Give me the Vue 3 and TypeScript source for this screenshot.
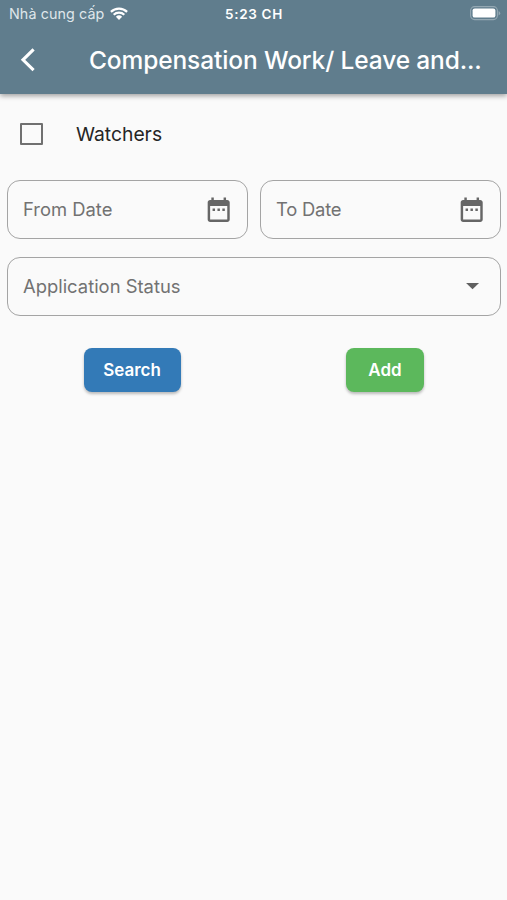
<script setup lang="ts">
import { ref } from 'vue'

interface DateField {
  id: string
  label: string
}

const provider = 'Nhà cung cấp'
const time = '5:23 CH'
const title = 'Compensation Work/ Leave and...'
const watchers = ref(false)
const dateFields: DateField[] = [
  { id: 'from', label: 'From Date' },
  { id: 'to', label: 'To Date' },
]
</script>

<template>
  <div class="screen">
    <header class="header">
      <div class="status">
        <div class="carrier">
          <span class="provider">{{ provider }}</span>
          <svg class="wifi" viewBox="0 0 18 13">
            <path d="M0.9 4.9a11.6 11.6 0 0 1 16.2 0M3.7 7.8a7.6 7.6 0 0 1 10.6 0" fill="none" stroke="#fff" stroke-width="2.2" />
            <path d="M5.9 9.7a4.5 4.5 0 0 1 6.2 0L9 12.9z" fill="#fff" />
          </svg>
        </div>
        <span class="time">{{ time }}</span>
        <svg class="battery" viewBox="0 0 31 15">
          <rect x="0.6" y="0.6" width="26.8" height="13" rx="4" fill="none" stroke="#94a8b3" stroke-width="1.1" />
          <rect x="2.6" y="2.4" width="22.8" height="9.2" rx="2.2" fill="#fff" />
          <path d="M28.6 5v4.4q1.6-.7 1.6-2.2T28.6 5z" fill="#94a8b3" />
        </svg>
      </div>
      <div class="toolbar">
        <button class="back" aria-label="Back">
          <svg viewBox="0 0 15 24"><path d="M13.6 1.4 3 11.8l10.6 10.4" fill="none" stroke="#fff" stroke-width="3.1" /></svg>
        </button>
        <h1 class="title">{{ title }}</h1>
      </div>
    </header>

    <main class="form">
      <div class="watchers" @click="watchers = !watchers">
        <span class="box" :class="{ checked: watchers }"></span>
        <span class="watchers-label">Watchers</span>
      </div>
      <div class="dates">
        <div v-for="field in dateFields" :key="field.id" class="field">
          <span :class="['label', field.id]">{{ field.label }}</span>
          <svg class="icon calendar" viewBox="0 0 24 24">
            <path d="M9 11H7v2h2v-2zm4 0h-2v2h2v-2zm4 0h-2v2h2v-2zm2-7h-1V2h-2v2H8V2H6v2H5c-1.11 0-1.99.9-1.99 2L3 20c0 1.1.89 2 2 2h14c1.1 0 2-.9 2-2V6c0-1.1-.9-2-2-2zm0 16H5V9h14v11z" fill="#666" />
          </svg>
        </div>
      </div>
      <div class="field select">
        <span class="label application">Application Status</span>
        <svg class="icon" viewBox="0 0 24 24"><path d="m7.4 9.7 5.3 5.2L18 9.7z" fill="#606060" /></svg>
      </div>
      <div class="actions">
        <div class="cell"><button class="btn search">Search</button></div>
        <div class="cell"><button class="btn add">Add</button></div>
      </div>
    </main>
  </div>
</template>

<style>
body {
  background: #fafafa;
}
</style>

<style scoped>
.screen {
  width: 100%;
  height: 900px;
  overflow: hidden;
  background: #fafafa;
  font-family: Inter, 'Liberation Sans', sans-serif;
}
.header {
  height: 94px;
  background: #607d8d;
  box-shadow: 0 2px 5px rgba(0, 0, 0, 0.36);
  color: #fff;
}
.status {
  display: grid;
  grid-template-columns: 1fr auto 1fr;
  align-items: center;
  height: 26px;
  padding: 0 6px 0 9px;
}
.carrier {
  display: flex;
  align-items: center;
  gap: 6px;
}
.provider {
  color: #dfe6ea;
  font-size: 14.3px;
  line-height: 26px;
  letter-spacing: 0.1px;
  padding-top: 1px;
}
.wifi {
  width: 18px;
  height: 13px;
}
.time {
  font-size: 13.5px;
  font-weight: 600;
  line-height: 26px;
  letter-spacing: 0.65px;
  padding-top: 1px;
  margin-right: 2px;
}
.battery {
  width: 31px;
  height: 15px;
  justify-self: end;
}
.toolbar {
  display: flex;
  align-items: center;
  height: 67px;
  padding-left: 20px;
}
.back {
  display: flex;
  width: 15px;
  height: 24px;
  padding: 0;
  border: 0;
  background: none;
}
.back svg {
  width: 15px;
  height: 24px;
}
.title {
  margin: 0 0 0 54px;
  font-size: 24.5px;
  font-weight: 500;
  line-height: 30px;
  letter-spacing: -0.12px;
  white-space: nowrap;
}
.form {
  padding: 29px 6px 0 7px;
}
.watchers {
  display: flex;
  align-items: center;
  height: 22px;
  padding-left: 13px;
}
.box {
  box-sizing: border-box;
  width: 23px;
  height: 22px;
  border: 2.4px solid #707070;
  border-radius: 1px;
}
.box.checked {
  background: #607d8d;
}
.watchers-label {
  margin-left: 33px;
  color: #252525;
  font-size: 19.3px;
  line-height: 22px;
}
.dates {
  display: grid;
  grid-template-columns: 1fr 1fr;
  gap: 12px;
  margin-top: 35px;
}
.field {
  box-sizing: border-box;
  display: flex;
  align-items: center;
  justify-content: space-between;
  height: 59px;
  padding: 0 14px 1px 15px;
  border: 1px solid #a4a4a4;
  border-radius: 13px;
}
.label {
  color: #727272;
  font-size: 18.4px;
  line-height: 24px;
}
.label.to {
  letter-spacing: -0.2px;
}
.icon {
  width: 29.4px;
  height: 29.4px;
}
.calendar {
  margin-top: 2px;
}
.select {
  margin-top: 18px;
}
.actions {
  display: grid;
  grid-template-columns: 1fr 1fr;
  gap: 12px;
  margin-top: 32px;
}
.cell {
  display: flex;
  justify-content: center;
}
.btn {
  height: 44px;
  padding: 0;
  border: 0;
  border-radius: 8px;
  box-shadow: 0 2px 3px rgba(0, 0, 0, 0.26);
  color: #fff;
  font-family: inherit;
  font-size: 17px;
  font-weight: 600;
}
.search {
  width: 97px;
  margin-left: 9px;
  background: #337ab7;
}
.add {
  width: 78px;
  margin-left: 9px;
  background: #5cb85c;
}
</style>
